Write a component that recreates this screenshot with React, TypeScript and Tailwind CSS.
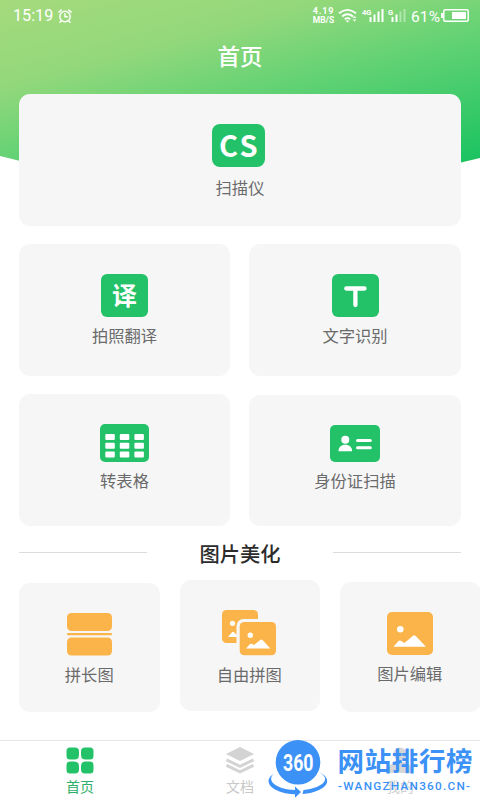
import type { ReactNode } from 'react';

const GREEN = '#23c268';
const ORANGE = '#fbb44a';

function Card({ label, icon, className = '' }: { label: string; icon: ReactNode; className?: string }) {
  return (
    <div className={`flex flex-col items-center rounded-[11px] bg-[#f6f6f7] ${className}`}>
      {icon}
      <span className="mt-[6px] text-[16.3px] leading-6 whitespace-nowrap text-[#6a6a6a]">{label}</span>
    </div>
  );
}

function StatusBar() {
  return (
    <div className="flex h-8 items-center pl-[13px] text-white">
      <span className="w-[42px] pt-px font-[Roboto] text-[16.2px] leading-none">15:19</span>
      <svg width="16" height="16" viewBox="0 0 16 16" fill="none" stroke="currentColor" strokeWidth="1.4" strokeLinecap="round" className="ml-[2px]">
        <circle cx="8" cy="8.5" r="5.2" />
        <path d="M8 5.6V8.8H10.3M1.8 4.1L4.3 2M14.2 4.1L11.7 2M4 13.2L3 14.3M12 13.2L13 14.3" />
      </svg>
      <div className="ml-[239px] flex w-[23px] flex-col items-center font-[Roboto] font-bold">
        <span className="text-[9px] leading-[9px] tracking-[0.8px]">4.19</span>
        <span className="text-[8.5px] leading-[9px]">MB/S</span>
      </div>
      <svg width="135" height="18" viewBox="335 7 135 18" fill="none" className="-ml-px">
        <g stroke="white" strokeWidth="1.8">
          <path d="M340 13.3Q348.500 6.500 357 13.300M343 16.500Q348.500 12 354 16.500M345.700 19.200Q348.500 17 351.300 19.200" />
        </g>
        <path d="M346.500 20.500H350.500L348.500 22.500ZM355.500 16L357.500 18H353.500ZM353.500 19.500H357.500L355.500 21.500Z" fill="white" />
        <text x="363" y="14.800" fontFamily="Roboto" fontWeight="700" fontSize="7.500" fill="white">4G</text>
        <path d="M370.500 17h2v5h-2zM374.500 14.500h2v7.500h-2zM378.500 11.500h2v10.500h-2zM382.500 9h2v13h-2z" fill="white" />
        <text x="389" y="14.800" fontFamily="Roboto" fontWeight="700" fontSize="7.500" fill="white">G</text>
        <path d="M392.500 17h2v5h-2zM396.500 14.500h2v7.500h-2z" fill="white" />
        <path d="M400.500 11.500h2v10.500h-2zM404.500 9h2v13h-2z" fill="white" opacity=".4" />
        <text x="412" y="21.500" fontFamily="Roboto" fontSize="15.500" textLength="29" fill="white">61%</text>
        <rect x="444.800" y="9.800" width="24.400" height="11.400" rx="1.500" stroke="white" strokeWidth="1.500" />
        <path d="M442 13h2v5h-2zM453 12h14v7h-14z" fill="white" />
      </svg>
    </div>
  );
}

function TableIcon() {
  return (
    <svg width="49" height="38" viewBox="0 0 48 38" preserveAspectRatio="none">
      <rect width="48" height="38" rx="5" fill={GREEN} />
      {[10, 18.7, 27.4].map((y) =>
        [5.2, 19.4, 33.7].map((x) => <rect key={`${x}-${y}`} x={x} y={y} width="9.300" height="6" rx="1" fill="white" />),
      )}
    </svg>
  );
}

function IdIcon() {
  return (
    <svg width="50" height="37" viewBox="0 0 50 37">
      <rect width="50" height="37" rx="5" fill={GREEN} />
      <g fill="white">
        <circle cx="15.300" cy="14.800" r="4" />
        <path d="M8.500 26.200C8.500 22.300 11.200 19.800 15.300 19.800S22.100 22.300 22.100 26.200Z" />
        <rect x="26" y="14" width="15.800" height="3" rx="1.500" />
        <rect x="26" y="21.200" width="15.800" height="3" rx="1.500" />
      </g>
    </svg>
  );
}

function LongIcon() {
  return (
    <svg width="45" height="43" viewBox="0 0 45 43" fill={ORANGE}>
      <rect width="45" height="18" rx="4.500" />
      <rect y="20" width="45" height="2.300" rx="1" />
      <rect y="24.500" width="45" height="18" rx="4.500" />
    </svg>
  );
}

function CollageIcon() {
  return (
    <svg width="54" height="46" viewBox="0 0 54 46">
      <rect width="36" height="33" rx="4.500" fill={ORANGE} />
      <circle cx="10.500" cy="13.300" r="2.600" fill="white" />
      <path d="M6 27L10.200 22Q11 21.200 12 22.200L17 27Z" fill="white" />
      <rect x="14.500" y="9" width="45" height="43" rx="7" fill="#f6f6f7" />
      <rect x="17.700" y="12" width="36.300" height="33.300" rx="4.500" fill={ORANGE} />
      <circle cx="28.300" cy="25.200" r="2.700" fill="white" />
      <path d="M24 38.500L27.800 34.200Q28.800 33.300 30.200 34L32 35L38.500 29.800Q39.500 29 40.500 30L48.300 38.500Z" fill="white" />
    </svg>
  );
}

function EditIcon() {
  return (
    <svg width="46" height="43" viewBox="0 0 46 43">
      <rect width="46" height="43" rx="5" fill={ORANGE} />
      <circle cx="13.300" cy="17.300" r="3.300" fill="white" />
      <path d="M6.500 34.800L11.500 29Q12.700 27.900 14.200 28.900L17.500 31L26 23.700Q27.300 22.800 28.500 23.800L39 34.800Z" fill="white" />
    </svg>
  );
}

function Watermark() {
  return (
    <div className="absolute top-[738px] left-[266px] flex w-[214px] text-[#3b91f6]">
      <svg width="64" height="62" viewBox="266 738 64 62" fill="currentColor">
        <circle cx="298" cy="762.300" r="22.300" />
        <path d="M276 772.500C267 777 265.500 784 275 789.500C281.500 793 289 794.300 295 794.300V797.800L301 792L295 786.500V790C286 790 276 787 272.500 782.500C269.500 778.500 271.500 775 276 772.500Z" />
        <path d="M320 772.500C329.500 777.500 330 785 319 790C314 792.300 309 793.500 302.500 794L303.500 790C313 789 321 786 324 782C326.500 778.500 324.500 775.500 320 772.500Z" />
        <text x="283" y="771" fontFamily="Roboto" fontWeight="700" fontSize="24" textLength="30.500" lengthAdjust="spacingAndGlyphs" fill="white">360</text>
      </svg>
      <svg width="150" height="62" viewBox="330 738 150 62" fill="currentColor">
        <text x="337.500" y="771" fontFamily="'Noto Sans CJK SC', sans-serif" fontWeight="700" fontSize="26.500" textLength="135">网站排行榜</text>
        <text x="338" y="789.800" fontFamily="Roboto, sans-serif" fontWeight="500" fontSize="11.800" textLength="132">-WANGZHAN360.CN-</text>
      </svg>
    </div>
  );
}

export default function App() {
  return (
    <div className="relative flex h-[800px] w-[480px] flex-col overflow-hidden bg-white font-['Noto_Sans_CJK_SC',sans-serif]">
      <svg width="480" height="190" viewBox="0 0 480 190" className="absolute top-0 left-0">
        <defs>
          <linearGradient id="header" gradientUnits="userSpaceOnUse" x1="0" y1="0" x2="73" y2="275">
            <stop offset="0" stopColor="#a5da7d" />
            <stop offset=".3" stopColor="#92d87b" />
            <stop offset=".55" stopColor="#62d274" />
            <stop offset=".95" stopColor="#1fc462" />
          </linearGradient>
        </defs>
        <path d="M0 0H480V158Q240 219 0 156Z" fill="url(#header)" />
      </svg>
      <div className="relative flex flex-col">
        <StatusBar />
        <h1 className="flex h-[62px] justify-center pt-[7px] text-[22.5px] leading-[33px] font-medium text-white">首页</h1>
        <Card
          label="扫描仪"
          className="mx-[19px] h-[132px] pt-[30px]"
          icon={
            <div className="mr-[3px] mb-[2px] flex h-[43px] w-[53px] items-center justify-center rounded-[8px] bg-[#23c268] pl-[2px] font-['Noto_Sans_CJK_SC',sans-serif] text-[29px] leading-none font-bold tracking-[2.5px] text-white">
              <span className="-mt-[2px]">CS</span>
            </div>
          }
        />
        <div className="mx-[19px] mt-[18px] grid grid-cols-[211px_212px] gap-x-[19px] gap-y-[18px]">
          <Card
            label="拍照翻译"
            className="h-[132px] pt-[30px]"
            icon={
              <div className="flex h-[43px] w-[47px] items-center justify-center rounded-[6px] bg-[#23c268] text-[25px] leading-none font-bold text-white">
                <span className="-mt-[2px]">译</span>
              </div>
            }
          />
          <Card
            label="文字识别"
            className="h-[132px] pt-[30px]"
            icon={
              <svg width="47" height="43" viewBox="0 0 47 43">
                <rect width="47" height="43" rx="6" fill={GREEN} />
                <path d="M14.300 14.500H32.500M23.400 14.500V31" stroke="white" strokeWidth="4.300" strokeLinecap="round" fill="none" />
              </svg>
            }
          />
          <Card label="转表格" className="h-[132px] pt-[30px]" icon={<TableIcon />} />
          <Card label="身份证扫描" className="mt-px h-[131px] pt-[30px]" icon={<IdIcon />} />
        </div>
        <div className="mx-[19px] flex h-[54px] items-center justify-between pb-px">
          <div className="h-px w-[128px] bg-[#dcdcdc]" />
          <h2 className="text-[20.300px] leading-[30px] font-medium text-[#2c2c2c]">图片美化</h2>
          <div className="h-px w-[128px] bg-[#dcdcdc]" />
        </div>
        <div className="ml-[19px] flex items-start gap-[20px]">
          <Card label="拼长图" className="mt-[3px] h-[129px] w-[140.5px] shrink-0 pt-[30px]" icon={<LongIcon />} />
          <Card label="自由拼图" className="h-[131px] w-[140.5px] shrink-0 pt-[30px] pr-px" icon={<CollageIcon />} />
          <Card label="图片编辑" className="mt-[2px] h-[130px] w-[140.5px] shrink-0 pt-[30px] pr-px" icon={<EditIcon />} />
        </div>
      </div>
      <nav className="mt-auto grid h-[60px] shrink-0 grid-cols-3 border-t border-[#e6e6e6] text-[14px] leading-5">
        <div className="flex flex-col items-center pt-[6px] text-[#2fae69]">
          <svg width="28" height="27" viewBox="0 0 28 27" fill={GREEN}>
            <path d="M4 .5H9Q13 .5 13 4.500V8Q13 12.500 8.500 12.500H4Q.5 12.500 .5 9V4Q.5 .5 4 .5ZM19 .5H24Q27.500 .5 27.500 4V9Q27.500 12.500 24 12.500H19.500Q15 12.500 15 8V4.500Q15 .5 19 .5ZM4 14.500H8.500Q13 14.500 13 19V22.500Q13 26.500 9 26.500H4Q.5 26.500 .5 23V18Q.5 14.500 4 14.500ZM19.500 14.500H24Q27.500 14.500 27.500 18V23Q27.500 26.500 24 26.500H19Q15 26.500 15 22.500V19Q15 14.500 19.500 14.500Z" />
          </svg>
          <span className="mt-[2px]">首页</span>
        </div>
        <div className="flex flex-col items-center pt-[6px] text-[#c8c8c8]">
          <svg width="28" height="27" viewBox="0 0 28 27" fill="none">
            <path d="M14 0L28 7L14 14L0 7Z" fill="#d3d3d3" />
            <path d="M.5 12.800L14 19.300L27.500 12.800M.5 18.300L14 24.800L27.500 18.300" stroke="#d3d3d3" strokeWidth="2.900" />
          </svg>
          <span className="mt-[2px]">文档</span>
        </div>
        <div className="flex flex-col items-center pt-[6px] text-[#d0d0d0]">
          <svg width="28" height="27" viewBox="0 0 28 27" fill="#d6d6d6">
            <circle cx="14" cy="7" r="6.500" />
            <path d="M2 26C2 18 7 14.500 14 14.500S26 18 26 26Z" />
          </svg>
          <span className="mt-[2px]">我的</span>
        </div>
      </nav>
      <Watermark />
    </div>
  );
}
